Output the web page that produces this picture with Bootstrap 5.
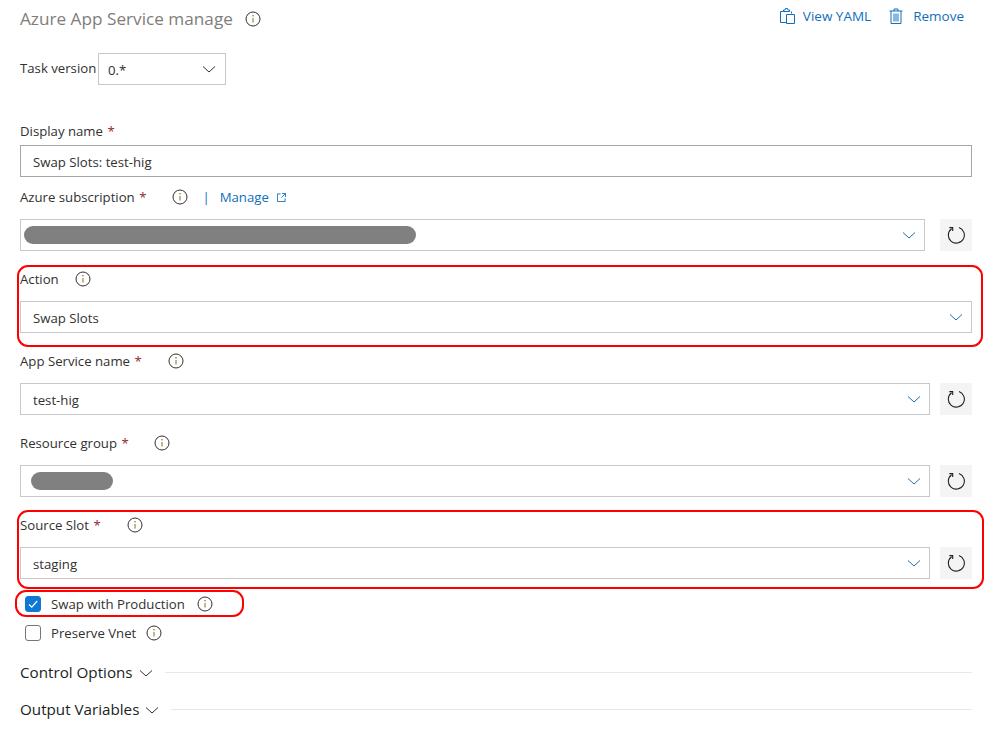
<!DOCTYPE html>
<html lang="en">
<head>
<meta charset="utf-8">
<title>Azure App Service manage</title>
<link href="https://cdn.jsdelivr.net/npm/bootstrap@5.3.0/dist/css/bootstrap.min.css" rel="stylesheet">
<style>
body{font-family:"Open Sans","Noto Sans",sans-serif;font-size:13.2px;color:#323130;background:#fff;overflow:hidden}
.page-wrap{width:952px;margin-left:20px;height:749px}
.task-head{height:38px}
.task-title{font-size:17.2px;line-height:38px;color:#7f7d7b;margin:0;font-weight:400}
.title-info{margin-left:12px}
.act-link{color:#106ebe;text-decoration:none;line-height:32px}
.act-group{margin-top:-6px;margin-right:8px;font-size:13.5px}
.act-gap-a{margin-left:8px}
.act-gap-b{margin-left:18px}
.act-gap-c{margin-left:10px}
.ver-row{height:32px;margin-top:15px;margin-bottom:35px}
.ver-lbl{width:78px}
.ver-box{width:128px;height:32px;border:1px solid #c8c8c8;padding:0 8px 0 9px}
.val-text{padding-top:3px}
.lbl-row{height:22px;line-height:22px}
.disp-lbl{margin-bottom:3px}
.disp-fld{margin-bottom:9px}
.req{color:#8f2a30;margin-left:1px}
.fld{height:32px;border:1px solid #c8c8c8;padding:0 12px;background:#fff}
.fld-dark{border-color:#a6a6a6}
.fld-sel{padding-right:7px}
.fld-sub{padding-left:3px;margin-right:15px}
.fld-rg{padding-left:10px}
.fld-near{margin-right:10px}
.chev{flex:none}
.reload{width:32px;height:32px;background:#f4f4f4;flex:none}
.field-block{position:relative;margin-bottom:17px}
.slot-block{margin-bottom:10px}
.gap-lbl{margin-bottom:11px}
.mask-bar{height:18px;background:#808080;border-radius:9px}
.mask-lg{width:392px}
.mask-sm{width:82px}
.red-ring{position:absolute;border:2px solid #f00;border-radius:11px;pointer-events:none}
.ring-action{left:-3px;right:-11px;top:-3px;bottom:-14px}
.ring-slot{left:-3px;right:-12px;top:-4px;bottom:-10px}
.ring-swap{left:-5px;width:229px;top:1px;height:27px}
.chk-row{height:29px;position:relative}
.chk-box{width:16px;height:16px;border-radius:3px;border:1px solid #767676;margin-left:5px;margin-right:10px;flex:none}
.chk-on{background:#0f78d4;border-color:#0f78d4}
.chk-text{padding-top:2px}
.i-swap{margin-left:12px}
.i-vnet{margin-left:10px}
.i-sub{margin-left:26px}
.i-act{margin-left:16px}
.i-req{margin-left:26px}
.i-rg{margin-left:25px}
.pipe{margin-left:14px;margin-right:10px}
.ext{margin-left:8px}
.sect-first{margin-top:7px}
.sect-row{height:37px}
.sect-name{font-size:15.2px;color:#201f1e}
.sect-chev{margin-left:5px;margin-right:11px}
.sect-line{height:1px;background:#e8e8e8;margin-top:-1px}
</style>
</head>
<body>
<svg width="0" height="0" class="d-block" aria-hidden="true"><defs>
<symbol id="i-info" viewBox="0 0 16 16"><circle cx="8" cy="8" r="7" fill="none" stroke="#323130"/><path d="M8 7v4.500" stroke="#8a6a1f" fill="none"/><circle cx="8" cy="4.800" r=".8" fill="#8a6a1f"/></symbol>
<symbol id="i-down" viewBox="0 0 16 16"><path d="M2 5.500 8 11l6-5.500" fill="none" stroke="currentColor" stroke-width="1"/></symbol>
<symbol id="i-reload" viewBox="0 0 18 18"><path d="M4.600 2.700A8 8 0 1 0 12 1.600" fill="none" stroke="#201f1e" stroke-width="1.100"/><path d="M2.400 1.600h3.300v3.300" fill="none" stroke="#201f1e" stroke-width="1.100"/></symbol>
</defs></svg>
<div class="page-wrap">
  <div class="task-head d-flex align-items-center">
    <h1 class="task-title">Azure App Service manage</h1>
    <svg class="title-info" width="16" height="16"><use href="#i-info"/></svg>
    <div class="ms-auto d-flex align-items-center act-link act-group">
      <svg width="15" height="16" viewBox="0 0 15 16" fill="none" stroke="#106ebe"><path d="M3.500 3.500h-3v11h6M3.500 3.500V2h1.500l.5-1.500h2L8 2h1.500v1.500zM11.500 5.500V3.500M6.500 6.500h8v9h-8z"/></svg>
      <span class="act-gap-a">View YAML</span>
      <svg class="act-gap-b" width="14" height="16" viewBox="0 0 14 16" fill="none" stroke="#106ebe"><path d="M.5 3h13M5 3V1h4v2M2 3v12.500h10V3M5 5.500v8M7 5.500v8M9 5.500v8"/></svg>
      <span class="act-gap-c">Remove</span>
    </div>
  </div>
  <div class="ver-row d-flex align-items-center">
    <span class="ver-lbl">Task version</span>
    <div class="ver-box d-flex align-items-center justify-content-between"><span class="val-text">0.*</span><svg class="chev" width="16" height="16" color="#323130"><use href="#i-down"/></svg></div>
  </div>

  <div class="lbl-row disp-lbl">Display name <span class="req">*</span></div>
  <div class="fld fld-dark disp-fld d-flex align-items-center"><span class="val-text">Swap Slots: test-hig</span></div>

  <div class="field-block">
    <div class="lbl-row gap-lbl d-flex align-items-center">
      <span>Azure subscription <span class="req">*</span></span>
      <svg class="i-sub" width="16" height="16"><use href="#i-info"/></svg>
      <span class="act-link pipe">|</span>
      <span class="act-link">Manage</span>
      <svg class="ext" width="9" height="9" viewBox="0 0 10 10" fill="none" stroke="#106ebe"><path d="M4 1H.5v8.500h8.500V6M5.500.5h4v4M9.500.5 5 5"/></svg>
    </div>
    <div class="d-flex">
      <div class="fld fld-sel fld-sub flex-grow-1 d-flex align-items-center justify-content-between">
        <div class="mask-bar mask-lg"></div>
        <svg class="chev" width="16" height="16" color="#1f6fb0"><use href="#i-down"/></svg>
      </div>
      <div class="reload d-flex align-items-center justify-content-center"><svg width="18" height="18"><use href="#i-reload"/></svg></div>
    </div>
  </div>

  <div class="field-block">
    <div class="lbl-row gap-lbl d-flex align-items-center">
      <span>Action</span>
      <svg class="i-act" width="16" height="16"><use href="#i-info"/></svg>
    </div>
    <div class="fld fld-sel d-flex align-items-center justify-content-between">
      <span class="val-text">Swap Slots</span>
      <svg class="chev" width="16" height="16" color="#1f6fb0"><use href="#i-down"/></svg>
    </div>
    <div class="red-ring ring-action"></div>
  </div>

  <div class="field-block">
    <div class="lbl-row gap-lbl d-flex align-items-center">
      <span>App Service name <span class="req">*</span></span>
      <svg class="i-req" width="16" height="16"><use href="#i-info"/></svg>
    </div>
    <div class="d-flex">
      <div class="fld fld-sel fld-near flex-grow-1 d-flex align-items-center justify-content-between">
        <span class="val-text">test-hig</span>
        <svg class="chev" width="16" height="16" color="#1f6fb0"><use href="#i-down"/></svg>
      </div>
      <div class="reload d-flex align-items-center justify-content-center"><svg width="18" height="18"><use href="#i-reload"/></svg></div>
    </div>
  </div>

  <div class="field-block">
    <div class="lbl-row gap-lbl d-flex align-items-center">
      <span>Resource group <span class="req">*</span></span>
      <svg class="i-rg" width="16" height="16"><use href="#i-info"/></svg>
    </div>
    <div class="d-flex">
      <div class="fld fld-sel fld-near fld-rg flex-grow-1 d-flex align-items-center justify-content-between">
        <div class="mask-bar mask-sm"></div>
        <svg class="chev" width="16" height="16" color="#1f6fb0"><use href="#i-down"/></svg>
      </div>
      <div class="reload d-flex align-items-center justify-content-center"><svg width="18" height="18"><use href="#i-reload"/></svg></div>
    </div>
  </div>

  <div class="field-block slot-block">
    <div class="lbl-row gap-lbl d-flex align-items-center">
      <span>Source Slot <span class="req">*</span></span>
      <svg class="i-req" width="16" height="16"><use href="#i-info"/></svg>
    </div>
    <div class="d-flex">
      <div class="fld fld-sel fld-near flex-grow-1 d-flex align-items-center justify-content-between">
        <span class="val-text">staging</span>
        <svg class="chev" width="16" height="16" color="#1f6fb0"><use href="#i-down"/></svg>
      </div>
      <div class="reload d-flex align-items-center justify-content-center"><svg width="18" height="18"><use href="#i-reload"/></svg></div>
    </div>
    <div class="red-ring ring-slot"></div>
  </div>

  <div class="chk-row d-flex align-items-center">
    <span class="chk-box chk-on d-flex align-items-center justify-content-center"><svg width="12" height="12" viewBox="0 0 12 12" fill="none" stroke="#fff" stroke-width="1.200"><path d="M2 6.500 4.800 9.200 10.200 3"/></svg></span>
    <span class="chk-text">Swap with Production</span>
    <svg class="i-swap" width="16" height="16"><use href="#i-info"/></svg>
    <div class="red-ring ring-swap"></div>
  </div>
  <div class="chk-row d-flex align-items-center">
    <span class="chk-box"></span>
    <span class="chk-text">Preserve Vnet</span>
    <svg class="i-vnet" width="16" height="16"><use href="#i-info"/></svg>
  </div>

  <div class="sect-row sect-first d-flex align-items-center">
    <span class="sect-name">Control Options</span>
    <svg class="chev sect-chev" width="16" height="16" color="#323130"><use href="#i-down"/></svg>
    <div class="sect-line flex-grow-1"></div>
  </div>
  <div class="sect-row d-flex align-items-center">
    <span class="sect-name">Output Variables</span>
    <svg class="chev sect-chev" width="16" height="16" color="#323130"><use href="#i-down"/></svg>
    <div class="sect-line flex-grow-1"></div>
  </div>
</div>
<script src="https://cdn.jsdelivr.net/npm/bootstrap@5.3.0/dist/js/bootstrap.bundle.min.js"></script>
</body>
</html>
